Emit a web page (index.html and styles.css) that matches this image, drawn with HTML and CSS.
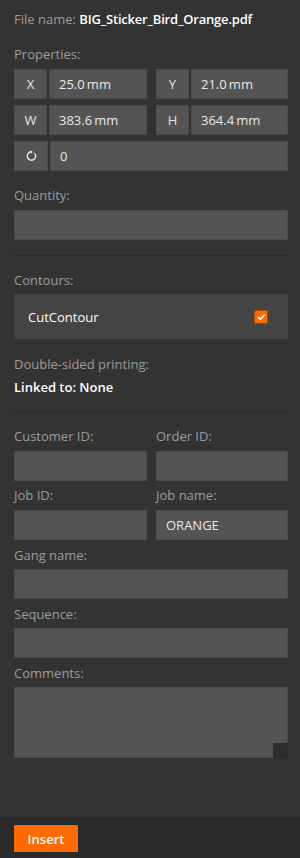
FILE: index.html
```html
<!DOCTYPE html>
<html>
  <head>
    <title>Insert</title>
    <link rel="stylesheet" href="styles.css">
  </head>
  <body>
    <div class="panel">
      <!-- file -->
      <div class="file"><span class="label">File name:</span> <span class="value">BIG_Sticker_Bird_Orange.pdf</span></div>

      <!-- properties -->
      <div class="label head">Properties:</div>
      <div class="props">
        <div class="pair"><div class="key">X</div><div class="field">25.0&#8201;mm</div></div>
        <div class="pair"><div class="key">Y</div><div class="field">21.0&#8201;mm</div></div>
        <div class="pair"><div class="key">W</div><div class="field">383.6&#8201;mm</div></div>
        <div class="pair"><div class="key">H</div><div class="field">364.4&#8201;mm</div></div>
        <div class="pair wide">
          <div class="key">
            <svg width="12" height="12" viewBox="0 0 12 12">
              <path d="M9.6 3.2 A4.2 4.2 0 1 1 6 1.8" fill="none" stroke="#e6e6e6" stroke-width="1.4"/>
              <path d="M5.2 0.2 L8 1.9 L5.3 3.7 Z" fill="#e6e6e6"/>
            </svg>
          </div>
          <div class="field">0</div>
        </div>
      </div>

      <div class="label head q">Quantity:</div>
      <div class="field"></div>

      <hr class="sep">

      <div class="label top">Contours:</div>
      <div class="contours">
        <span>CutContour</span>
        <span class="check">
          <svg width="9" height="8" viewBox="0 0 9 8"><path d="M1.2 4.2 L3.5 6.3 L7.8 1.5" fill="none" stroke="#fff" stroke-width="1.6"/></svg>
        </span>
      </div>

      <div class="label head2">Double-sided printing:</div>
      <div class="linked">Linked to: None</div>

      <hr class="sep sep2">

      <div class="grid top">
        <div>
          <div class="label">Customer ID:</div>
          <div class="field"></div>
        </div>
        <div>
          <div class="label">Order ID:</div>
          <div class="field"></div>
        </div>
        <div>
          <div class="label">Job ID:</div>
          <div class="field"></div>
        </div>
        <div>
          <div class="label">Job name:</div>
          <div class="field">ORANGE</div>
        </div>
      </div>

      <div class="label row">Gang name:</div>
      <div class="field"></div>
      <div class="label row">Sequence:</div>
      <div class="field"></div>
      <div class="label row">Comments:</div>
      <div class="field comments"><span class="grip"></span></div>
    </div>

    <div class="footer">
      <button class="insert">Insert</button>
    </div>
  </body>
</html>
```

FILE: styles.css
```css
body {
  margin: 0;
  background: #333333;
  font-family: "Open Sans", "Noto Sans", sans-serif;
  font-size: 13px;
  color: #ffffff;
}

.panel {
  height: 817px;
  box-sizing: border-box;
  padding: 11px 12px 0 14px;
  border-left: 1px solid #2e2e2e;
  margin-left: -1px;
}

.label {
  color: #9c9c9c;
  line-height: 16px;
}

.file {
  line-height: 16px;
}

.file .value {
  color: #ffffff;
  font-weight: 600;
  letter-spacing: -0.2px;
}

.head {
  margin-top: 19px;
  margin-bottom: 7px;
}

.head.q {
  margin-top: 16px;
}

.head2 {
  margin-top: 17px;
}

.top {
  margin-top: 16px;
}

.row {
  margin-top: 7px;
  margin-bottom: 6px;
}

.props {
  display: grid;
  grid-template-columns: 133px 132px;
  column-gap: 9px;
  row-gap: 6px;
}

.pair {
  display: flex;
  gap: 2px;
}

.pair.wide {
  grid-column: 1 / 3;
}

.key {
  width: 33px;
  flex: none;
  height: 30px;
  background: #545454;
  border: 1px solid #4a4a4a;
  box-sizing: border-box;
  display: flex;
  align-items: center;
  justify-content: center;
  color: #e6e6e6;
}

.pair.wide .key {
  width: 34px;
}

.field {
  flex: 1;
  height: 30px;
  box-sizing: border-box;
  background: #545454;
  border: 1px solid #4a4a4a;
  padding: 0 9px;
  display: flex;
  align-items: center;
  color: #e9e9e9;
}

.sep {
  border: 0;
  border-top: 1px solid #2a2a2a;
  margin: 15px 0 0 0;
  height: 0;
}

.sep2 {
  margin-top: 16px;
}

.contours {
  margin-top: 6px;
  height: 45px;
  background: #444444;
  display: flex;
  align-items: center;
  justify-content: space-between;
  padding: 0 20px 0 14px;
  color: #ffffff;
}

.check {
  width: 14px;
  height: 14px;
  border-radius: 2px;
  background: #ff6a00;
  border: 1px solid #b04a00;
  box-sizing: border-box;
  display: flex;
  align-items: center;
  justify-content: center;
}

.linked {
  margin-top: 7px;
  line-height: 16px;
  font-weight: 600;
}

.grid {
  display: grid;
  grid-template-columns: 133px 132px;
  column-gap: 9px;
  row-gap: 6px;
}

.grid .label {
  margin-bottom: 7px;
}

.comments {
  height: 71px;
  position: relative;
  margin-top: 1px;
}

.grip {
  position: absolute;
  right: -1px;
  bottom: -1px;
  width: 15px;
  height: 15px;
  background: #2c2c2c;
}

.footer {
  height: 41px;
  background: #2a2a2a;
  padding: 7px 0 0 13px;
  box-sizing: border-box;
}

.insert {
  width: 66px;
  height: 29px;
  background: #ff6a00;
  border: 1px solid #1e2a33;
  border-radius: 2px;
  color: #ffffff;
  font-family: "Open Sans", "Noto Sans", sans-serif;
  font-size: 13px;
  font-weight: 600;
  padding: 0;
}
```
